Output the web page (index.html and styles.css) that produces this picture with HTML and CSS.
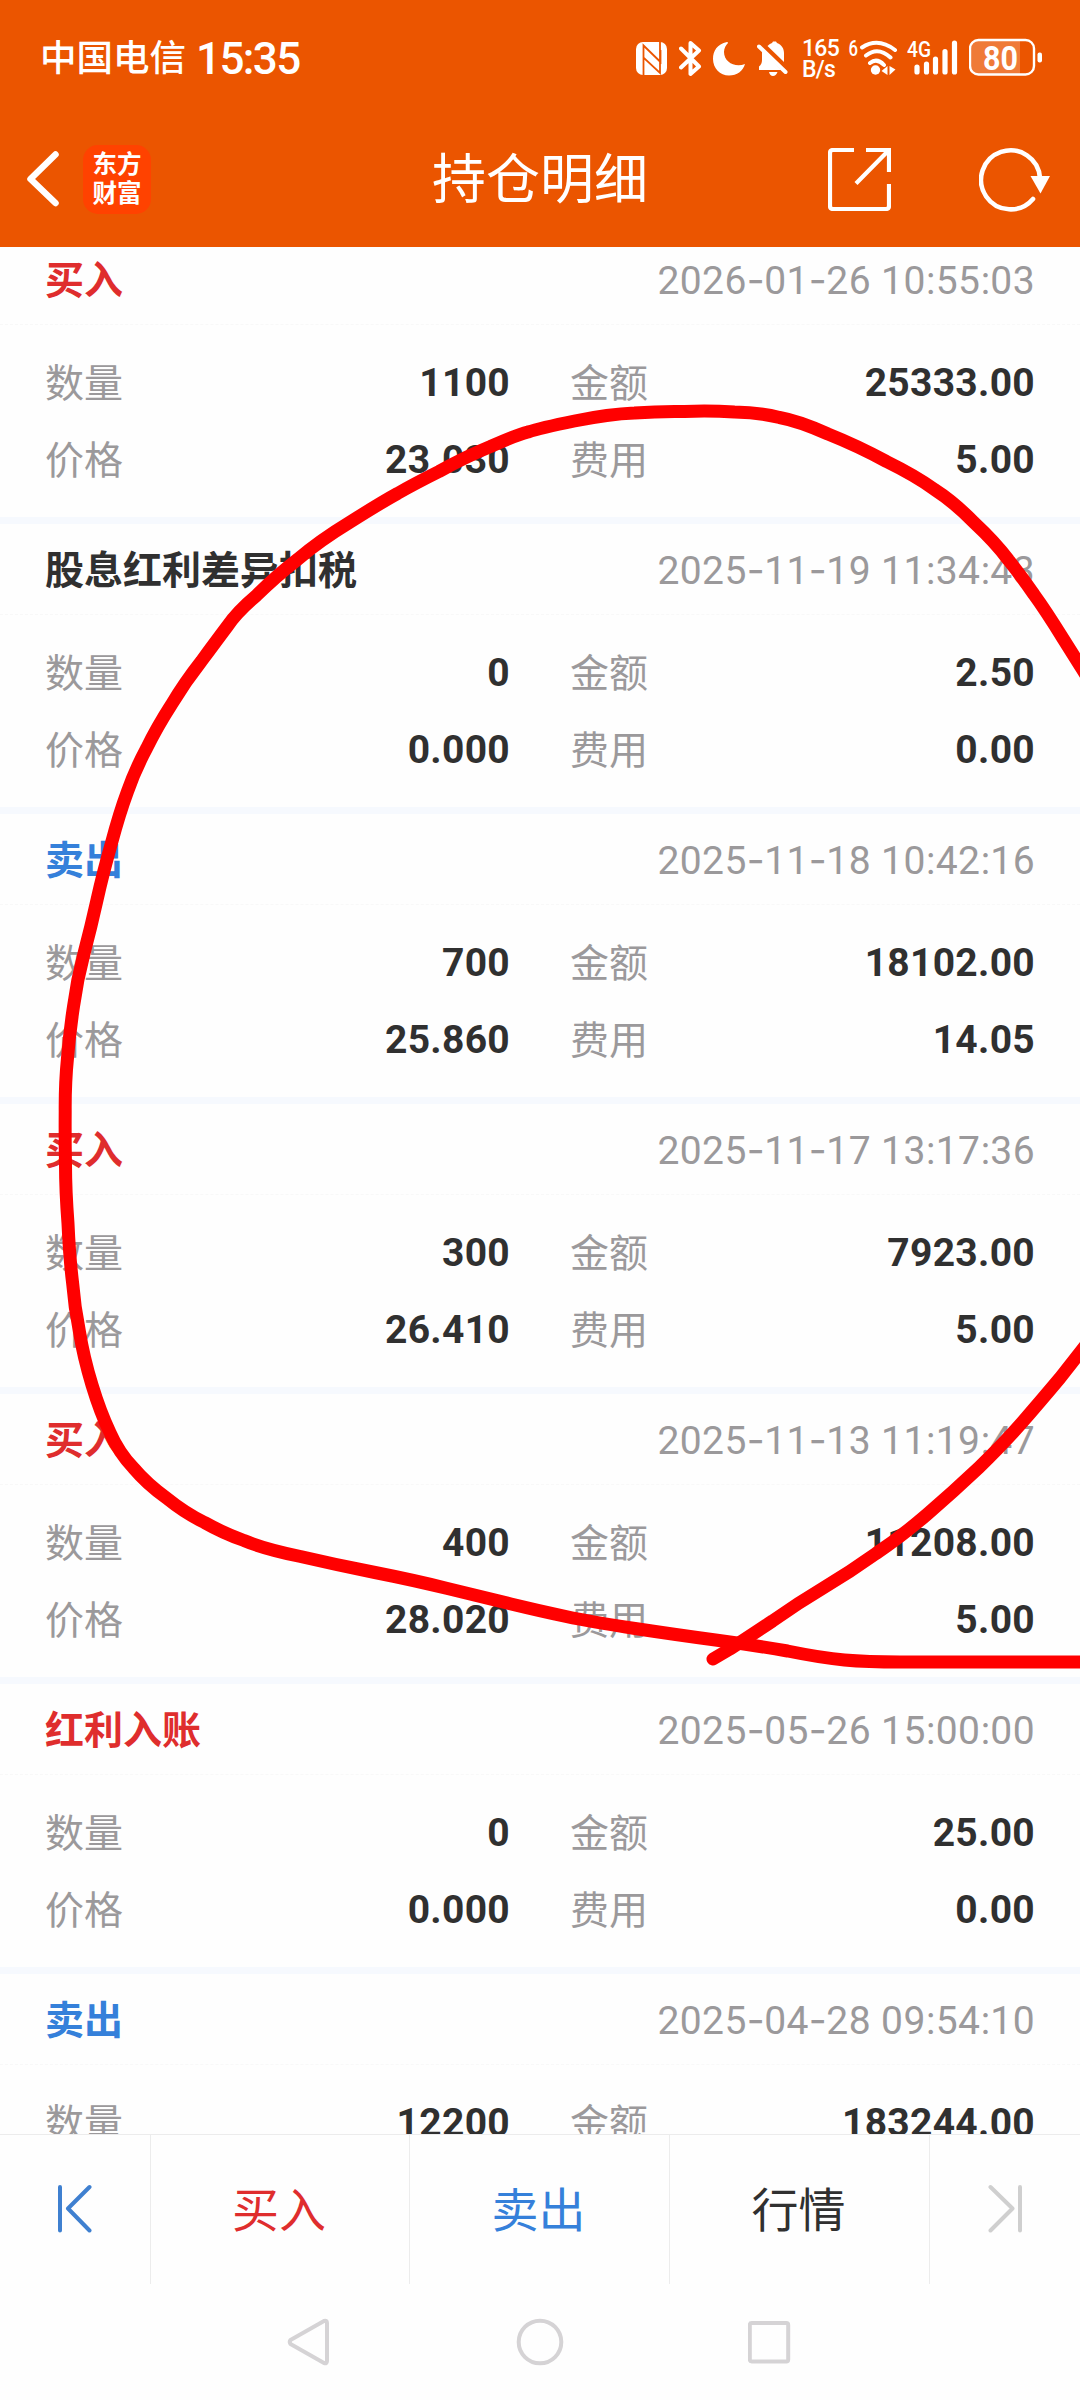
FILE: index.html
```html
<!DOCTYPE html>
<html lang="zh-CN">
<head>
<meta charset="utf-8">
<title>持仓明细</title>
<link rel="stylesheet" href="styles.css">
</head>
<body>
<div class="screen">
  <header class="top">
    <div class="status">
      <div class="carrier">中国电信</div>
      <div class="clock">15:35</div>
      <div class="status-icons">
        <svg class="ic" width="43" height="40" viewBox="636 38 43 40"><rect x="636" y="42" width="31" height="33" rx="7" fill="#fff"/><path d="M643.500 75V45.500L660.500 62V50M660 42V73L643.500 57.500V68" fill="none" stroke="#eb5500" stroke-width="1.800"/></svg>
        <svg class="ic" width="34" height="40" viewBox="679 38 34 40"><path d="M681 48.500L699 66.500 690.500 74V43L699 50.500 681 67.500" fill="none" stroke="#fff" stroke-width="4" stroke-linecap="round" stroke-linejoin="round"/></svg>
        <svg class="ic" width="44" height="40" viewBox="713 38 44 40"><path d="M727 42C717 44 713 51 713 59C713 68 720 75.500 729 75.500C737 75.500 743 71 745 64C735 68 724 62 724 52C724 48 726 45 728 43Q728 42 727 42Z" fill="#fff"/></svg>
        <svg class="ic" width="45" height="40" viewBox="757 38 45 40"><path d="M767.500 46Q770 43.500 772 43L773 41.500H776L777 43C782 45 784 49 784 53V62ZM762 51L781 70H759V66.500Q762 64 762 60ZM769 72H777.500Q776 76 773 76T769 72Z" fill="#fff"/><path d="M759 46.500L785.500 72" stroke="#fff" stroke-width="4" stroke-linecap="round"/></svg>
        <div class="speed"><span>165</span><span>B/s</span></div>
        <svg class="ic" width="58" height="40" viewBox="848 38 58 40"><text x="848.500" y="55.500" class="tiny" textLength="9.500" lengthAdjust="spacingAndGlyphs">6</text><path d="M862 47.500Q878 37 895 50M866 55.500Q878 46 890.500 57.500M870 63Q877 57.500 884 65" fill="none" stroke="#fff" stroke-width="4" stroke-linecap="round"/><circle cx="875.500" cy="70" r="4.700" fill="#fff"/><path d="M881.500 71L887.500 66V75ZM889.500 66L895.500 69.500 889.500 75Z" fill="#fff"/></svg>
        <svg class="ic" width="63" height="40" viewBox="906 38 63 40"><text x="907" y="57" class="tiny" textLength="24" lengthAdjust="spacingAndGlyphs">4G</text><path d="M917 67V72M926.500 64V72M935.500 59V72M945 51.500V72M954.500 43V72" stroke="#fff" stroke-width="5.200" stroke-linecap="round"/></svg>
        <svg class="ic" width="74" height="40" viewBox="969 38 74 40"><path d="M977 40H1020V74H977Q970 74 970 67V47Q970 40 977 40Z" fill="#fff" opacity=".22"/><rect x="970" y="40" width="64" height="34.500" rx="8.500" fill="none" stroke="#fff" stroke-width="2.400"/><rect x="1037.500" y="52.500" width="4.500" height="10" rx="2" fill="#fff"/><text x="983" y="69.500" class="level" textLength="35" lengthAdjust="spacingAndGlyphs">80</text></svg>
      </div>
    </div>
    <div class="titlebar">
      <svg class="back" width="34" height="58" viewBox="26 151 34 58"><path d="M55.500 155.500L30.500 180 55.500 204" fill="none" stroke="#fff" stroke-width="6.500" stroke-linecap="round" stroke-linejoin="round"/></svg>
      <div class="logo"><span>东方</span><span>财富</span></div>
      <h1 class="title">持仓明细</h1>
      <svg class="share" width="63" height="63" viewBox="0 0 63 63"><path d="M26 2H5Q2 2 2 5V58Q2 61 5 61H58Q61 61 61 58V36M38 2H61V24M60 3L28 35.500" fill="none" stroke="#fff" stroke-width="4.200"/></svg>
      <svg class="refresh" width="72" height="66" viewBox="979 146 72 66"><path d="M1033 199A29.500 29.500 0 1 1 1040 178" fill="none" stroke="#fff" stroke-width="4.600" stroke-linecap="round"/><path d="M1030.500 176H1050L1040.500 193.500Z" fill="#fff"/></svg>
    </div>
  </header>

  <main class="list">
    <article class="record">
      <div class="head"><b class="buy">买入</b><time>2026<i>-</i>01<i>-</i>26 10<u>:</u>55<u>:</u>03</time></div>
      <div class="grid"><span>数量</span><b>1100</b><span>金额</span><b>25333.00</b><span>价格</span><b>23.030</b><span>费用</span><b>5.00</b></div>
    </article>
    <article class="record">
      <div class="head"><b>股息红利差异扣税</b><time>2025<i>-</i>11<i>-</i>19 11<u>:</u>34<u>:</u>43</time></div>
      <div class="grid"><span>数量</span><b>0</b><span>金额</span><b>2.50</b><span>价格</span><b>0.000</b><span>费用</span><b>0.00</b></div>
    </article>
    <article class="record">
      <div class="head"><b class="sell">卖出</b><time>2025<i>-</i>11<i>-</i>18 10<u>:</u>42<u>:</u>16</time></div>
      <div class="grid"><span>数量</span><b>700</b><span>金额</span><b>18102.00</b><span>价格</span><b>25.860</b><span>费用</span><b>14.05</b></div>
    </article>
    <article class="record">
      <div class="head"><b class="buy">买入</b><time>2025<i>-</i>11<i>-</i>17 13<u>:</u>17<u>:</u>36</time></div>
      <div class="grid"><span>数量</span><b>300</b><span>金额</span><b>7923.00</b><span>价格</span><b>26.410</b><span>费用</span><b>5.00</b></div>
    </article>
    <article class="record">
      <div class="head"><b class="buy">买入</b><time>2025<i>-</i>11<i>-</i>13 11<u>:</u>19<u>:</u>47</time></div>
      <div class="grid"><span>数量</span><b>400</b><span>金额</span><b>11208.00</b><span>价格</span><b>28.020</b><span>费用</span><b>5.00</b></div>
    </article>
    <article class="record">
      <div class="head"><b class="buy">红利入账</b><time>2025<i>-</i>05<i>-</i>26 15<u>:</u>00<u>:</u>00</time></div>
      <div class="grid"><span>数量</span><b>0</b><span>金额</span><b>25.00</b><span>价格</span><b>0.000</b><span>费用</span><b>0.00</b></div>
    </article>
    <article class="record">
      <div class="head"><b class="sell">卖出</b><time>2025<i>-</i>04<i>-</i>28 09<u>:</u>54<u>:</u>10</time></div>
      <div class="grid"><span>数量</span><b>12200</b><span>金额</span><b>183244.00</b></div>
    </article>
  </main>

  <nav class="tabs">
    <div class="tab"><svg width="36" height="50" viewBox="58 2182 36 50"><path d="M61 2186V2229.500M90.500 2186L69 2207.500 90.500 2229.500" fill="none" stroke="#3f80d0" stroke-width="4" stroke-linecap="round" stroke-linejoin="round"/></svg></div>
    <div class="tab buy"><span>买入</span></div>
    <div class="tab sell"><span>卖出</span></div>
    <div class="tab"><span>行情</span></div>
    <div class="tab"><svg width="36" height="50" viewBox="987 2182 36 50"><path d="M1020 2186V2229.500M990.500 2186L1012.500 2207.500 990.500 2229.500" fill="none" stroke="#cfcfcf" stroke-width="4" stroke-linecap="round" stroke-linejoin="round"/></svg></div>
  </nav>

  <div class="system">
    <svg width="46" height="50" viewBox="286 2317 46 50"><path d="M290.500 2340Q289 2342 290.500 2344L324 2363Q327 2364 327 2361V2323Q327 2320 324 2321Z" fill="none" stroke="#d5d3d5" stroke-width="4" stroke-linejoin="round"/></svg>
    <svg width="50" height="50" viewBox="0 0 50 50"><circle cx="25" cy="25" r="21.300" fill="none" stroke="#d5d3d5" stroke-width="4"/></svg>
    <svg width="46" height="50" viewBox="2 0 46 50"><rect x="3.800" y="6" width="38.400" height="38.400" rx="2" fill="none" stroke="#d5d3d5" stroke-width="4"/></svg>
  </div>

  <!-- Freehand marker stroke over the records -->
  <svg class="marker" width="1080" height="2400" viewBox="0 0 1080 2400">
    <path d="M1086 675L1063 638.500Q1046 611 1034 594.500Q1022 577 1008.500 560Q995 542 974 522.500Q954 502 934.500 489.500Q916 476 886.500 461.500Q858 446 828 434Q799 421 779.500 417.500Q760 412.500 734.500 412Q709 410.500 684.500 411.500Q660 411 634.500 413Q609 414 574.500 421Q540 428 528 432Q516 435 490.500 446.500Q465 457 439 471.500Q413 484.500 397.500 493.500Q382 502 351 521.500Q319 541 297.500 559.500Q275 577 256.500 595.500Q237 612 227.500 626Q217 640 201.500 661Q185 682 171.500 704.500Q157 727 146.500 748.500Q135 770 127.500 791.500Q119.500 813 111.500 843Q103 873 97 900Q91 927 84 953.500Q77 980 73.500 1006.500Q69.500 1033 67.500 1058Q65 1083 65.200 1111.500Q65 1140 65.500 1165Q65.500 1190 68 1223.500Q69.500 1257 72.500 1282Q74.500 1307 79.500 1332Q83.500 1357 92 1385Q100.500 1413 110 1432.500Q119 1453 133.500 1468Q147 1484 166.500 1498Q185 1513 204.500 1522.500Q223 1533 244 1540.500Q264 1549 300.500 1556.500Q337 1565 375 1572.500Q413 1580 447.500 1588.500Q482 1597 511 1604Q540 1611 566 1616.500Q592 1622 635 1628.500Q678 1635 715.500 1640Q753 1645 787.500 1651Q822 1658 844.500 1660Q867 1662 900 1662L1080 1662"/>
    <path d="M713 1659L730 1649Q747 1638 772.500 1621Q798 1603 824 1587.500Q850 1572 876 1553.500Q902 1536 927.500 1514Q953 1492 979 1467.500Q1005 1442 1022 1422.500Q1039 1403 1060 1378L1086 1345"/>
  </svg>
</div>
</body>
</html>
```
FILE: styles.css
```css
* { box-sizing: border-box; }
body {
  margin: 0;
  background: #fefefe;
  font-family: Roboto, "Noto Sans CJK SC", sans-serif;
  color: #303030;
}
.screen {
  position: relative;
  display: flex;
  flex-direction: column;
  width: 1080px;
  height: 2400px;
  overflow: hidden;
}
svg { display: block; flex: none; }

.top { height: 247px; flex: none; background: #eb5500; color: #fff; }
.status {
  display: flex;
  align-items: center;
  height: 116px;
  padding-left: 40px;
}
.carrier { width: 155px; padding-top: 2px; font-size: 36.5px; font-weight: 500; line-height: 44px; white-space: nowrap; }
.clock {
  width: 441px;
  padding: 2px 0 0 1px;
  font-size: 44px;
  font-weight: 500;
  line-height: 52px;
  letter-spacing: -1.6px;
}
.status-icons { display: flex; align-items: center; }
.speed {
  display: flex;
  flex-direction: column;
  width: 46px;
  padding-top: 2px;
  font-size: 23px;
  font-weight: 500;
  line-height: 21px;
  letter-spacing: -.7px;
}
.tiny { font-size: 22px; font-weight: 500; fill: #fff; }
.level { font-size: 33px; font-weight: 700; fill: #fff; }

.titlebar {
  display: flex;
  align-items: center;
  height: 126px;
  padding-left: 26px;
}
.logo {
  display: flex;
  flex-direction: column;
  align-items: center;
  justify-content: center;
  width: 68px;
  height: 69px;
  margin-left: 23px;
  border-radius: 15px;
  background: #ff4200;
  font-size: 24.5px;
  font-weight: 700;
  line-height: 29px;
}
.title {
  width: 218px;
  margin: 0 0 0 280px;
  padding: 4px 0 0 1px;
  font-size: 54px;
  font-weight: 400;
  line-height: 70px;
  white-space: nowrap;
}
.share { margin-left: 179px; }
.refresh { margin-left: 88px; }

.list { height: 1887px; flex: none; overflow: hidden; }
.record { height: 290px; border-bottom: 7px solid #f6f9fe; }
.record:first-child { margin-top: -13px; }
.head {
  display: flex;
  justify-content: space-between;
  align-items: center;
  height: 91px;
  padding: 0 45px;
  border-bottom: 1px dashed #f8f8f8;
  font-size: 39px;
}
.head b { padding-bottom: 4px; }
time { padding-top: 1px; color: #9b999b; letter-spacing: .4px; }
time i { display: inline-block; width: 17.5px; font-family: Inter, sans-serif; font-style: normal; text-align: center; letter-spacing: 0; }
time u { display: inline-block; width: 10px; text-align: center; text-decoration: none; letter-spacing: 0; }
.grid {
  display: grid;
  grid-template-columns: 90px 375px 90px 375px;
  grid-auto-rows: 77px;
  align-items: center;
  padding: 19px 45px 0;
  font-size: 39px;
}
.grid span { padding-bottom: 5px; color: #9b999b; }
.grid span:nth-child(4n + 3) { margin-left: 60px; width: 90px; }
.grid b { padding-top: 1px; text-align: right; letter-spacing: .3px; }
.grid b:nth-child(4n) { margin-right: -60px; }
.buy { color: #df2d2d; }
.sell { color: #3580da; }

.tabs {
  display: grid;
  grid-template-columns: 151px 259px 260px 260px 150px;
  height: 150px;
  flex: none;
  border-top: 1px solid #ececec;
  font-size: 47px;
}
.tab {
  display: flex;
  align-items: center;
  justify-content: center;
  padding-bottom: 4px;
  border-right: 1px solid #ececec;
}
.tab span { padding: 0 2px 3px 0; }
.tab:last-child { border-right: 0; }

.system {
  display: flex;
  align-items: center;
  justify-content: center;
  gap: 183px;
  height: 116px;
}

.marker { position: absolute; inset: 0; }
.marker path {
  fill: none;
  stroke: #f00;
  stroke-width: 13px;
  stroke-linecap: round;
  stroke-linejoin: round;
}
```
